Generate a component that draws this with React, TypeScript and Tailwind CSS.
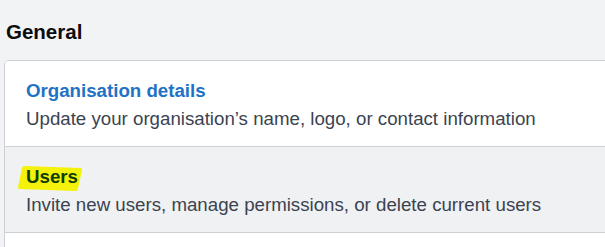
const rows = [
  {
    title: 'Organisation details',
    description: 'Update your organisation\u2019s name, logo, or contact information',
    active: false,
  },
  {
    title: 'Users',
    description: 'Invite new users, manage permissions, or delete current users',
    active: true,
  },
];

export default function App() {
  return (
    <div className="h-[247px] overflow-hidden bg-[#f2f3f5] font-['Liberation_Sans',Arial,sans-serif]">
      <h2 className="pl-[6px] pt-[20px] text-[20.5px] font-bold leading-[24px] text-[#0b0c0e]">General</h2>
      <div className="ml-[4px] mt-[16px] w-[640px] overflow-hidden rounded-tl-[5px] border-l border-t border-[#cdd0d5] bg-white">
        {rows.map((row) => (
          <div
            key={row.title}
            className={`border-b border-[#cdd0d5] pl-[21px] pt-[16px] pb-[13px] ${row.active ? 'bg-[#f0f1f3]' : 'bg-white'}`}
          >
            {row.active ? (
              <div className="text-[18.7px] font-bold leading-[28px]">
                <span className="relative inline-block">
                  <span className="absolute -left-[6px] -right-[2px] top-[4px] bottom-[1px] rotate-[2deg] skew-x-[-10deg] rounded-[2px] bg-[#f4f20a]" />
                  <span className="relative text-[#0f3d06]">{row.title}</span>
                </span>
              </div>
            ) : (
              <div className="text-[18.7px] font-bold leading-[28px] text-[#1f72c6]">{row.title}</div>
            )}
            <p className="text-[18.7px] leading-[28px] text-[#3b4350]">{row.description}</p>
          </div>
        ))}
        <div className="h-[40px] bg-white" />
      </div>
    </div>
  );
}
